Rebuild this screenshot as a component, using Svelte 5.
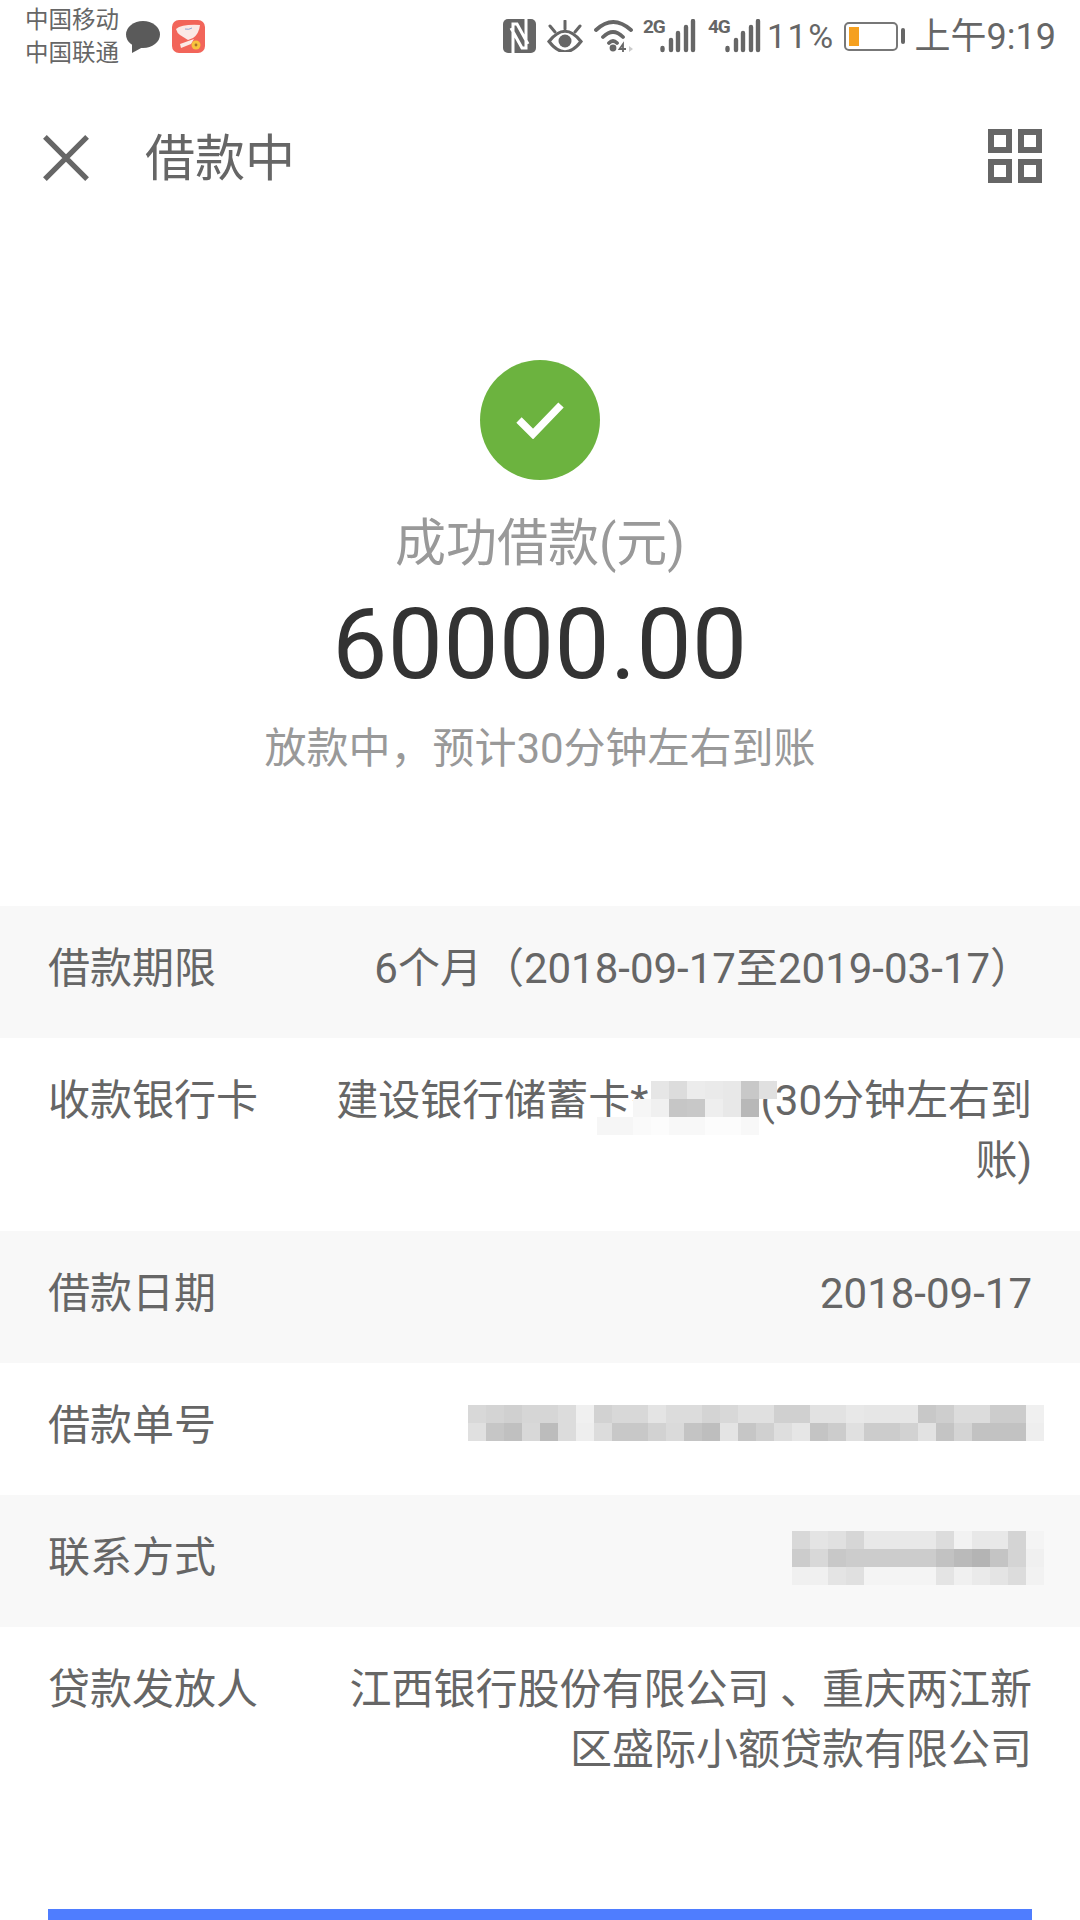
<script lang="ts">
  // grey levels for the pixelated parts of the screenshot, 0 means see-through
  const cardMask = [
    [0, 0, 0, 0xe6, 0xdc, 0xec, 0xea, 0xe8, 0xc8, 0xe0],
    [0, 0, 0xf6, 0xf0, 0xc6, 0xc8, 0xee, 0xe8, 0xb8, 0],
    [0xf6, 0xf6, 0xfa, 0xfc, 0xf8, 0xf8, 0xfc, 0xfc, 0xf8, 0]
  ];
  const orderMask = [
    [0xd8, 0xd4, 0xd0, 0xd6, 0xd6, 0xdc, 0xf0, 0xd2, 0xd8, 0xd8, 0xe4, 0xdc, 0xdc, 0xd4, 0xd8, 0xe0, 0xe0, 0xd0, 0xd0, 0xe2, 0xe2, 0xe8, 0xe6, 0xe6, 0xe6, 0xc8, 0xce, 0xdc, 0xdc, 0xcc, 0xcc, 0xf0],
    [0xe0, 0xc6, 0xc0, 0xd8, 0xbc, 0xdc, 0xee, 0xdc, 0xc8, 0xc8, 0xd2, 0xda, 0xc4, 0xbe, 0xe4, 0xc6, 0xd0, 0xde, 0xe6, 0xc4, 0xcc, 0xe0, 0xcc, 0xcc, 0xd2, 0xe2, 0xc4, 0xd4, 0xc2, 0xc2, 0xc2, 0xee]
  ];
  const phoneMask = [
    [0xd8, 0xe4, 0xe0, 0xd6, 0xe8, 0xe8, 0xe8, 0xe8, 0xdc, 0xf2, 0xe8, 0xe8, 0xd4, 0xf4],
    [0xcc, 0xd8, 0xc8, 0xcc, 0xcc, 0xcc, 0xcc, 0xcc, 0xc2, 0xba, 0xb4, 0xc4, 0xd4, 0xf0],
    [0xf0, 0xf0, 0xe4, 0xe0, 0xf4, 0xf4, 0xf4, 0xf4, 0xe4, 0xf0, 0xea, 0xe4, 0xdc, 0xf2]
  ];
  const grey = (v: number) => (v ? `rgb(${v},${v},${v})` : 'transparent');
</script>

{#snippet mosaic(rows: number[][])}
  <div class="mosaic">
    {#each rows as row}
      <div class="mosaic-row">
        {#each row as v}
          <i style={`background:${grey(v)}`}></i>
        {/each}
      </div>
    {/each}
  </div>
{/snippet}

{#snippet bars()}
  <svg viewBox="0 0 36 34" width="36" height="34">
    <path d="M2.5 29 V31 M11 21 V31 M18 14 V31 M26 8 V31 M33 2 V31" stroke="#666" stroke-width="4.4" stroke-linecap="round" />
  </svg>
{/snippet}

<div class="page">
  <div class="statusbar">
    <div class="carriers">
      <span>中国移动</span>
      <span>中国联通</span>
    </div>
    <svg class="bubble" viewBox="0 0 34 32" width="34" height="32">
      <ellipse cx="17" cy="13.5" rx="17" ry="13.5" fill="#5a5a5a" />
      <path d="M6 22 L6 32 L17 26 Z" fill="#5a5a5a" />
    </svg>
    <svg class="jd" viewBox="0 0 33 33" width="33" height="33">
      <rect width="33" height="33" rx="7" fill="#f2655a" />
      <path d="M4 9 Q10 4 28 5 Q27 14 21 18 L16 20 L8 15 Q5 13 4 9 Z" fill="#fbe9e6" />
      <path d="M13 9 Q17 10 20 8" stroke="#8fa6d8" stroke-width="1" fill="none" />
      <path d="M8 24 L22 19 L19 24 L9 28 Z" fill="#fbe9e6" />
      <circle cx="24" cy="25" r="4.5" fill="#f7c23c" />
      <circle cx="24" cy="25" r="1.4" fill="#a8702a" />
    </svg>

    <div class="status-right">
      <svg viewBox="0 0 33 34" width="33" height="34">
        <rect width="33" height="34" rx="5" fill="#666" />
        <path d="M10 34 V5 H14 L25 25 M23 0 V29 H19 L8 9" stroke="#fff" stroke-width="3" fill="none" />
      </svg>
      <svg class="eye" viewBox="0 0 36 32" width="36" height="32">
        <path d="M2 21.5 Q18 1 34 21.5 Q18 42 2 21.5 Z" stroke="#666" stroke-width="3.2" fill="none" />
        <circle cx="18" cy="21" r="6.5" fill="#666" />
        <path d="M18 1 V9 M3 6 L8 12 M33 6 L28 12" stroke="#666" stroke-width="3" stroke-linecap="round" />
      </svg>
      <svg class="wifi" viewBox="0 0 40 34" width="40" height="34">
        <path d="M2 11 Q19 -5 37 11 M9 18 Q19 8 29 18 M15 24 Q19 20 23 24" stroke="#666" stroke-width="3.8" fill="none" stroke-linecap="round" />
        <circle cx="19" cy="29" r="3.4" fill="#666" />
        <path d="M29 33 V25 L25.5 30 H32" stroke="#666" stroke-width="1.8" fill="none" />
        <path d="M35 27 L39 30 L35 33 Z" fill="#ccc" />
      </svg>
      <div class="signal">
        <b>2G</b>
        {@render bars()}
      </div>
      <div class="signal next">
        <b>4G</b>
        {@render bars()}
      </div>
      <span class="percent">11%</span>
      <div class="battery"><i></i></div>
      <span class="nub"></span>
      <span class="clock">上午9:19</span>
    </div>
  </div>

  <header class="topbar">
    <svg class="close" viewBox="0 0 48 48" width="46" height="46">
      <path d="M2 2 L46 46 M46 2 L2 46" stroke="#666" stroke-width="5.5" />
    </svg>
    <h1>借款中</h1>
    <svg class="grid-icon" viewBox="0 0 54 54" width="54" height="54">
      <g fill="none" stroke="#666" stroke-width="6">
        <rect x="3" y="3" width="18" height="18" />
        <rect x="33" y="3" width="18" height="18" />
        <rect x="3" y="33" width="18" height="18" />
        <rect x="33" y="33" width="18" height="18" />
      </g>
    </svg>
  </header>

  <section class="hero">
    <div class="ok">
      <svg viewBox="0 0 48 38" width="48" height="38">
        <path d="M3 19 L17 33 L45 4" stroke="#fff" stroke-width="7.5" fill="none" />
      </svg>
    </div>
    <div class="hero-label">成功借款(元)</div>
    <div class="amount">60000.00</div>
    <div class="hero-note">放款中，预计30分钟左右到账</div>
  </section>

  <section class="rows">
    <div class="row alt">
      <div class="label">借款期限</div>
      <div class="value">6个月（2018-09-17至2019-03-17）</div>
    </div>
    <div class="row two">
      <div class="label">收款银行卡</div>
      <div class="value">建设银行储蓄卡*<span class="masked">{@render mosaic(cardMask)}</span>(30分钟左右到账)</div>
    </div>
    <div class="row alt">
      <div class="label">借款日期</div>
      <div class="value">2018-09-17</div>
    </div>
    <div class="row">
      <div class="label">借款单号</div>
      <div class="value block order">{@render mosaic(orderMask)}</div>
    </div>
    <div class="row alt">
      <div class="label">联系方式</div>
      <div class="value block phone">{@render mosaic(phoneMask)}</div>
    </div>
    <div class="row two">
      <div class="label">贷款发放人</div>
      <div class="value">江西银行股份有限公司 、重庆两江新区盛际小额贷款有限公司</div>
    </div>
  </section>

  <div class="action"></div>
</div>

<style>
  :global(body) {
    background: #fff;
  }

  .page {
    width: 1080px;
    height: 1920px;
    overflow: hidden;
    background: #fff;
    color: #666;
    font-family: Roboto, "Noto Sans CJK SC", sans-serif;
  }

  .statusbar {
    display: flex;
    align-items: flex-start;
    height: 76px;
    padding: 4px 24px 0 25px;
    box-sizing: border-box;
  }

  .carriers {
    display: flex;
    flex-direction: column;
    font-size: 23.5px;
    line-height: 33px;
  }

  .bubble {
    margin: 17px 0 0 7px;
  }

  .jd {
    margin: 16px 0 0 12px;
  }

  .status-right {
    display: flex;
    align-items: center;
    margin-left: auto;
    height: 34px;
    margin-top: 15px;
  }

  .eye {
    margin-left: 11px;
  }

  .wifi {
    margin-left: 11px;
  }

  .signal {
    display: flex;
    align-items: flex-start;
    margin-left: 9px;
    height: 34px;
    width: 53px;
  }

  .signal.next {
    margin-left: 12px;
  }

  .signal b {
    flex: none;
    width: 17px;
    font-size: 19px;
    line-height: 16px;
    letter-spacing: -1px;
    font-weight: 700;
    color: #666;
    white-space: nowrap;
  }

  .percent {
    font-size: 34px;
    line-height: 34px;
    margin-left: 6px;
    letter-spacing: 1.5px;
  }

  .battery {
    width: 54px;
    height: 29px;
    margin-left: 9px;
    box-sizing: border-box;
    border: 2px solid #777;
    border-radius: 5px;
    padding: 3px;
  }

  .battery i {
    display: block;
    width: 10px;
    height: 100%;
    background: #f5a01f;
  }

  .nub {
    width: 4px;
    height: 16px;
    margin-left: 3px;
    border-radius: 2px;
    background: #666;
  }

  .clock {
    font-size: 36px;
    line-height: 36px;
    margin: 2px 0 0 10px;
  }

  .topbar {
    display: flex;
    align-items: center;
    height: 164px;
    padding: 0 38px 0 43px;
  }

  .close {
    flex: none;
  }

  .topbar h1 {
    margin: 2px 0 0 56px;
    font-size: 50px;
    font-weight: 400;
    line-height: 60px;
  }

  .grid-icon {
    margin: -4px 0 0 auto;
  }

  .hero {
    display: flex;
    flex-direction: column;
    align-items: center;
    padding-top: 120px;
    height: 666px;
    box-sizing: border-box;
  }

  .ok {
    display: flex;
    align-items: center;
    justify-content: center;
    width: 120px;
    height: 120px;
    border-radius: 50%;
    background: #6cb33f;
  }

  .hero-label {
    margin-top: 30px;
    font-size: 51px;
    line-height: 68px;
    color: #999;
  }

  .amount {
    margin-top: 9px;
    font-size: 98px;
    line-height: 116px;
    color: #333;
    letter-spacing: 0.5px;
  }

  .hero-note {
    margin-top: 16px;
    font-size: 42px;
    line-height: 60px;
    color: #999;
  }

  .row {
    display: flex;
    justify-content: space-between;
    padding: 33px 48px 39px 48px;
    font-size: 42px;
    line-height: 60px;
  }

  .row.two {
    padding-bottom: 40px;
  }

  .row.alt {
    background: #f8f8f8;
  }

  .label {
    flex: none;
    width: 270px;
  }

  .value {
    flex: 1;
    text-align: right;
  }

  .value.block {
    display: flex;
    justify-content: flex-end;
    height: 60px;
    box-sizing: border-box;
    position: relative;
  }

  .order {
    margin-right: -12px;
    padding-top: 9px;
  }

  .phone {
    margin-right: -12px;
    padding-top: 3px;
  }

  .masked {
    display: inline-block;
    position: relative;
    width: 112px;
    height: 1px;
  }

  .masked .mosaic {
    position: absolute;
    left: -51px;
    top: -33px;
  }

  .mosaic {
    display: flex;
    flex-direction: column;
  }

  .mosaic-row {
    display: flex;
    height: 18px;
  }

  .mosaic-row i {
    display: block;
    width: 18px;
    height: 18px;
  }

  .action {
    height: 100px;
    margin: 89px 48px 0;
    background: #4f7dff;
  }
</style>
